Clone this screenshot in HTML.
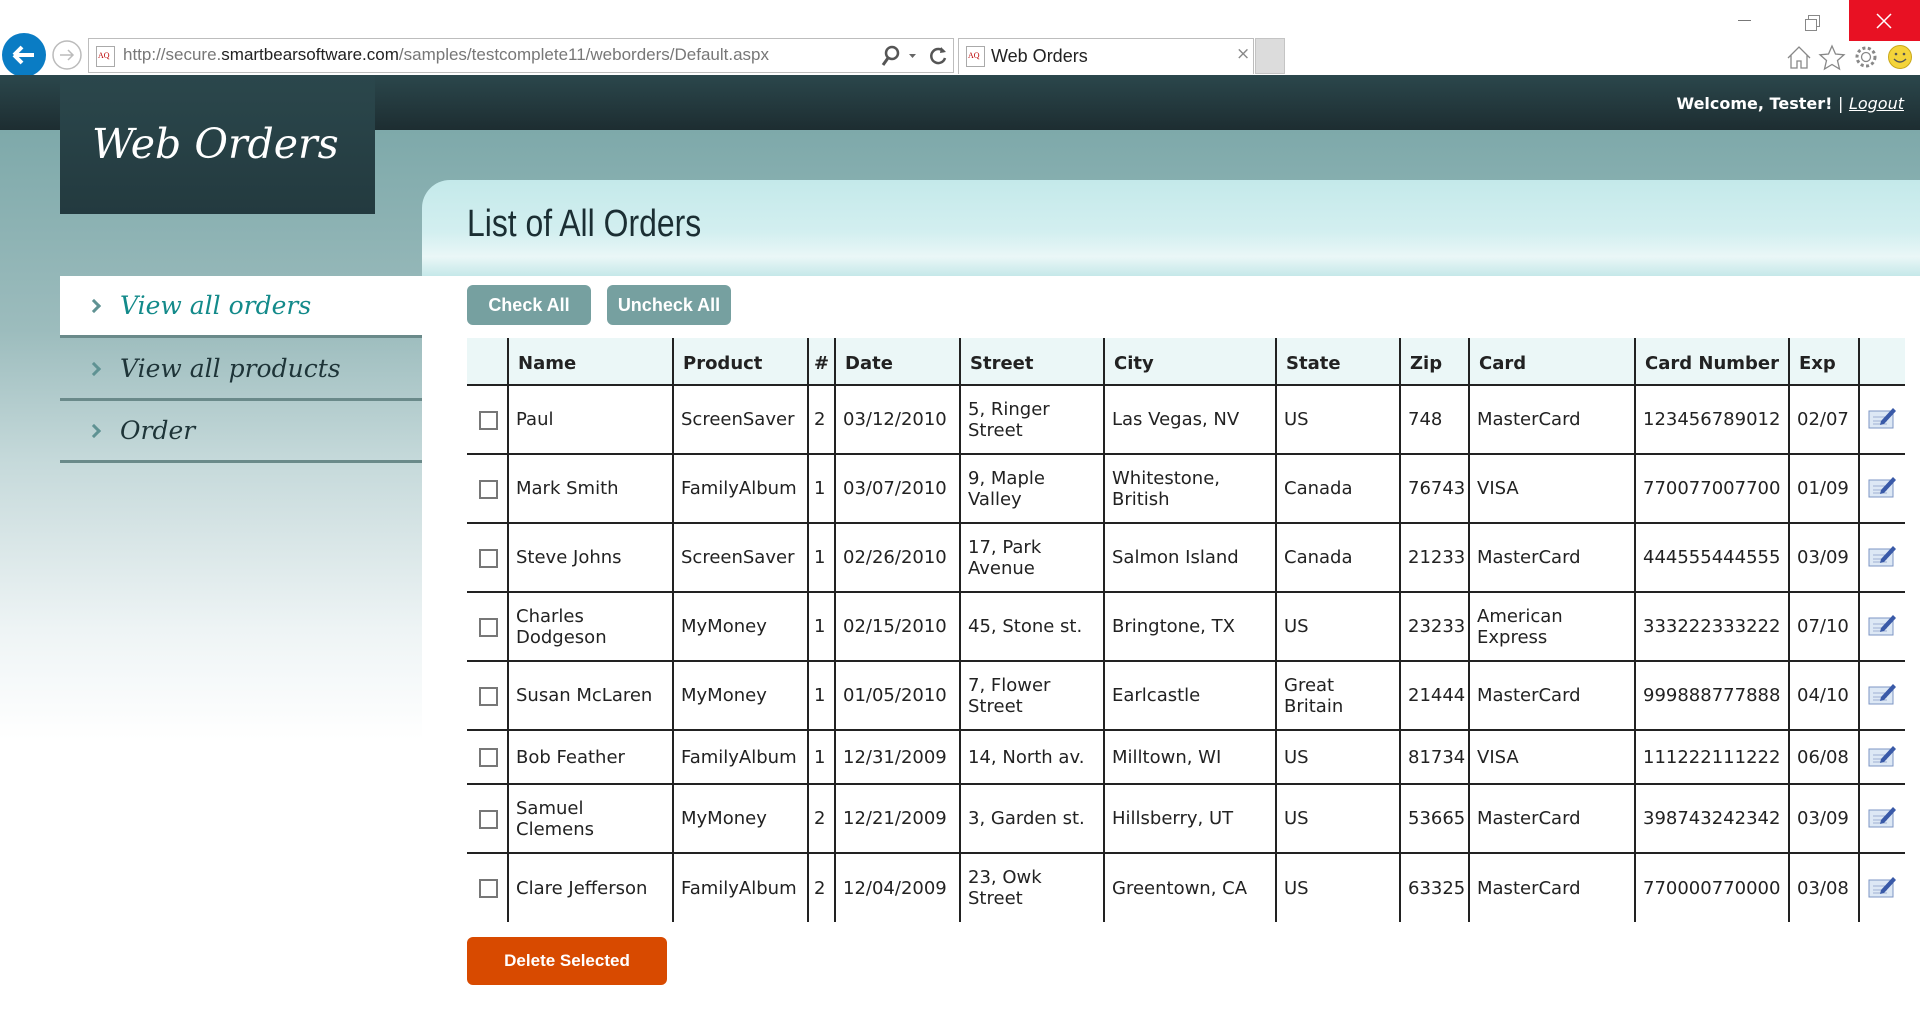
<!DOCTYPE html>
<html><head><meta charset="utf-8">
<style>
*{margin:0;padding:0;box-sizing:border-box}
body{width:1920px;height:1020px;overflow:hidden;background:#fff;font-family:"DejaVu Sans","Liberation Sans",sans-serif;position:relative}
.abs{position:absolute}
#chrome{left:0;top:0;width:1920px;height:75px;background:#fff}
#band{left:0;top:75px;width:1920px;height:55px;background:linear-gradient(#2b474c,#1d2d31)}
#teal{left:0;top:130px;width:1920px;height:890px;background:linear-gradient(#7ea9aa 0px,#9cbcbd 200px,#c5d9da 330px,#eef4f5 500px,#fff 610px)}
#logo{left:60px;top:75px;width:315px;height:139px;background:linear-gradient(#2b474c,#233a3f);color:#fff;font-family:"DejaVu Serif","Liberation Serif",serif;font-style:italic;font-size:41px;padding:45px 0 0 32px}
#panel{left:422px;top:180px;width:1498px;height:96px;border-top-left-radius:28px;background:linear-gradient(#c4e9ea 0%,#d3eff0 55%,#eaf7f7 80%,#c5e8e9 100%)}
#title{left:467px;top:203px;font-family:"Liberation Sans",sans-serif;font-size:38px;color:#1b2e33;transform:scaleX(.84);transform-origin:left}
#white{left:422px;top:276px;width:1498px;height:744px;background:#fff}
.nav{position:absolute;left:60px;width:362px;height:62px;border-bottom:3px solid #6a8a8a;font-family:"DejaVu Serif","Liberation Serif",serif;font-style:italic;font-size:25px;color:#1e3438;padding:15px 0 0 60px}
.nav:before{content:"";position:absolute;left:29px;top:25px;width:7px;height:7px;border-right:3px solid #5f9293;border-top:3px solid #5f9293;transform:rotate(45deg)}
.btn{position:absolute;top:285px;height:40px;background:#76a0a0;color:#fff;border-radius:6px;font-family:"Liberation Sans",sans-serif;font-weight:bold;font-size:18px;text-align:center;line-height:40px}
table{position:absolute;left:467px;top:338px;border-collapse:collapse;table-layout:fixed;font-size:18px;color:#222}
th{background:#ebf7f7;height:47px;text-align:left;padding:5px 0 0 9px;font-weight:bold;border-bottom:2px solid #222}
td{padding:0 0 0 7px;border-bottom:2px solid #222;line-height:21px;vertical-align:middle}
th+th,td+td{border-left:2px solid #222}
tr.r td{height:69px}
tr.s td{height:54px}
.cb{display:inline-block;width:19px;height:19px;border:2px solid #777;margin-left:5px;vertical-align:middle}
#del{left:467px;top:937px;width:200px;height:48px;background:#d84a00;color:#fff;border-radius:6px;font-family:"Liberation Sans",sans-serif;font-weight:bold;font-size:17px;text-align:center;line-height:48px}
</style></head><body>
<div id="chrome" class="abs">
 <svg class="abs" style="left:0;top:32px" width="90" height="44">
  <circle cx="24" cy="23" r="22" fill="#0a7cc4"/>
  <path d="M14 23h20M14 23l8-8M14 23l8 8" stroke="#fff" stroke-width="4" fill="none"/>
  <circle cx="67" cy="23" r="14" fill="#fff" stroke="#bbb" stroke-width="1.5"/>
  <path d="M60 23h13M68 18l5 5-5 5" stroke="#bbb" stroke-width="1.5" fill="none"/>
 </svg>
 <div class="abs" style="left:88px;top:38px;width:866px;height:35px;border:1px solid #bdbdbd"></div>
 <div class="abs" style="left:96px;top:46px;width:19px;height:21px;border:1px solid #aaa;font-size:8px;color:#b00;font-family:'Liberation Serif',serif;padding:4px 0 0 1px">AQ</div>
 <div class="abs" style="left:123px;top:45px;font-family:'Liberation Sans',sans-serif;font-size:17px;color:#777">http://secure.<span style="color:#222">smartbearsoftware.com</span>/samples/testcomplete11/weborders/Default.aspx</div>
 <svg class="abs" style="left:878px;top:44px" width="72" height="24"><circle cx="14" cy="9" r="6" stroke="#555" stroke-width="2.5" fill="none"/><path d="M10 14l-5 7" stroke="#555" stroke-width="3"/><path d="M31 10h7l-3.5 4z" fill="#666"/><path d="M66 8a7 7 0 1 0 1 6" stroke="#555" stroke-width="2.5" fill="none"/><path d="M63 3l5 5-6 1z" fill="#555"/></svg>
 <div class="abs" style="left:958px;top:38px;width:296px;height:36px;border:1px solid #bdbdbd;border-bottom:none"></div>
 <div class="abs" style="left:966px;top:46px;width:19px;height:21px;border:1px solid #aaa;font-size:8px;color:#b00;font-family:'Liberation Serif',serif;padding:4px 0 0 1px">AQ</div>
 <div class="abs" style="left:991px;top:46px;font-family:'Liberation Sans',sans-serif;font-size:18px;color:#222">Web Orders</div>
 <div class="abs" style="left:1236px;top:44px;font-size:17px;color:#888">×</div>
 <div class="abs" style="left:1255px;top:38px;width:30px;height:36px;background:#dcdcdc;border:1px solid #c4c4c4"></div>
 <div class="abs" style="left:1738px;top:20px;width:13px;height:1px;background:#777"></div>
 <div class="abs" style="left:1808px;top:15px;width:12px;height:12px;border:1px solid #888"></div>
 <div class="abs" style="left:1805px;top:19px;width:12px;height:12px;border:1px solid #888;background:#fff"></div>
 <div class="abs" style="left:1849px;top:0;width:71px;height:41px;background:#e81123"></div>
 <svg class="abs" style="left:1876px;top:13px" width="16" height="16"><path d="M1 1l14 14M15 1L1 15" stroke="#fff" stroke-width="1.5"/></svg>
 <svg class="abs" style="left:1786px;top:44px" width="134" height="28">
  <path d="M2 14L13 3l11 11M5 11v13h6v-7h4v7h6V11" stroke="#888" stroke-width="1.3" fill="none"/>
  <path d="M46 2l3.5 8 8.5.8-6.5 5.7 2 8.5L46 20.5 38.5 25l2-8.5L34 10.8l8.5-.8z" stroke="#888" stroke-width="1.3" fill="none"/>
  <circle cx="80" cy="13" r="4.5" stroke="#888" stroke-width="1.3" fill="none"/><circle cx="80" cy="13" r="9" stroke="#888" stroke-width="3" stroke-dasharray="3 2.5" fill="none"/>
  <circle cx="114" cy="13" r="11.5" fill="#f4d43a" stroke="#c9a81a"/><circle cx="110" cy="10" r="1.3" fill="#555"/><circle cx="118" cy="10" r="1.3" fill="#555"/><path d="M108 15q6 6 12 0" stroke="#555" stroke-width="1.3" fill="none"/>
 </svg>
</div>
<div id="band" class="abs"></div>
<div class="abs" style="right:16px;top:94px;color:#fff;font-family:'DejaVu Sans',sans-serif;font-weight:bold;font-size:16px">Welcome, Tester! <span style="font-weight:normal">|</span> <span style="font-weight:normal;font-style:italic;text-decoration:underline">Logout</span></div>
<div id="teal" class="abs"></div>
<div id="logo" class="abs">Web Orders</div>
<div id="panel" class="abs"></div>
<div id="title" class="abs">List of All Orders</div>
<div id="white" class="abs"></div>
<div class="nav" style="top:276px;background:#fff;color:#138a8a">View all orders</div>
<div class="nav" style="top:339px">View all products</div>
<div class="nav" style="top:401px">Order</div>
<div class="btn" style="left:467px;width:124px">Check All</div>
<div class="btn" style="left:607px;width:124px">Uncheck All</div>
<table>
<colgroup><col style="width:41px"><col style="width:165px"><col style="width:135px"><col style="width:27px"><col style="width:125px"><col style="width:144px"><col style="width:172px"><col style="width:124px"><col style="width:69px"><col style="width:166px"><col style="width:154px"><col style="width:70px"><col style="width:46px"></colgroup>
<tr><th></th><th>Name</th><th>Product</th><th style="padding-left:5px">#</th><th>Date</th><th>Street</th><th>City</th><th>State</th><th>Zip</th><th>Card</th><th>Card Number</th><th>Exp</th><th></th></tr>
<tr class="r"><td><span class="cb"></span></td><td>Paul</td><td>ScreenSaver</td><td style="padding-left:5px">2</td><td>03/12/2010</td><td>5, Ringer<br>Street</td><td>Las Vegas, NV</td><td>US</td><td>748</td><td>MasterCard</td><td>123456789012</td><td>02/07</td><td><svg width="30" height="26"><rect x="2" y="7" width="24" height="17" fill="#dde8f5" stroke="#7d96c4"/><path d="M6 13h12M6 17h14M6 20h14" stroke="#9fb1d3"/><path d="M14 17l12-13 3 3-12 13-4 1z" fill="#3a5aa8"/></svg></td></tr>
<tr class="r"><td><span class="cb"></span></td><td>Mark Smith</td><td>FamilyAlbum</td><td style="padding-left:5px">1</td><td>03/07/2010</td><td>9, Maple<br>Valley</td><td>Whitestone,<br>British</td><td>Canada</td><td>76743</td><td>VISA</td><td>770077007700</td><td>01/09</td><td><svg width="30" height="26"><rect x="2" y="7" width="24" height="17" fill="#dde8f5" stroke="#7d96c4"/><path d="M6 13h12M6 17h14M6 20h14" stroke="#9fb1d3"/><path d="M14 17l12-13 3 3-12 13-4 1z" fill="#3a5aa8"/></svg></td></tr>
<tr class="r"><td><span class="cb"></span></td><td>Steve Johns</td><td>ScreenSaver</td><td style="padding-left:5px">1</td><td>02/26/2010</td><td>17, Park<br>Avenue</td><td>Salmon Island</td><td>Canada</td><td>21233</td><td>MasterCard</td><td>444555444555</td><td>03/09</td><td><svg width="30" height="26"><rect x="2" y="7" width="24" height="17" fill="#dde8f5" stroke="#7d96c4"/><path d="M6 13h12M6 17h14M6 20h14" stroke="#9fb1d3"/><path d="M14 17l12-13 3 3-12 13-4 1z" fill="#3a5aa8"/></svg></td></tr>
<tr class="r"><td><span class="cb"></span></td><td>Charles<br>Dodgeson</td><td>MyMoney</td><td style="padding-left:5px">1</td><td>02/15/2010</td><td>45, Stone st.</td><td>Bringtone, TX</td><td>US</td><td>23233</td><td>American<br>Express</td><td>333222333222</td><td>07/10</td><td><svg width="30" height="26"><rect x="2" y="7" width="24" height="17" fill="#dde8f5" stroke="#7d96c4"/><path d="M6 13h12M6 17h14M6 20h14" stroke="#9fb1d3"/><path d="M14 17l12-13 3 3-12 13-4 1z" fill="#3a5aa8"/></svg></td></tr>
<tr class="r"><td><span class="cb"></span></td><td>Susan McLaren</td><td>MyMoney</td><td style="padding-left:5px">1</td><td>01/05/2010</td><td>7, Flower<br>Street</td><td>Earlcastle</td><td>Great<br>Britain</td><td>21444</td><td>MasterCard</td><td>999888777888</td><td>04/10</td><td><svg width="30" height="26"><rect x="2" y="7" width="24" height="17" fill="#dde8f5" stroke="#7d96c4"/><path d="M6 13h12M6 17h14M6 20h14" stroke="#9fb1d3"/><path d="M14 17l12-13 3 3-12 13-4 1z" fill="#3a5aa8"/></svg></td></tr>
<tr class="s"><td><span class="cb"></span></td><td>Bob Feather</td><td>FamilyAlbum</td><td style="padding-left:5px">1</td><td>12/31/2009</td><td>14, North av.</td><td>Milltown, WI</td><td>US</td><td>81734</td><td>VISA</td><td>111222111222</td><td>06/08</td><td><svg width="30" height="26"><rect x="2" y="7" width="24" height="17" fill="#dde8f5" stroke="#7d96c4"/><path d="M6 13h12M6 17h14M6 20h14" stroke="#9fb1d3"/><path d="M14 17l12-13 3 3-12 13-4 1z" fill="#3a5aa8"/></svg></td></tr>
<tr class="r"><td><span class="cb"></span></td><td>Samuel<br>Clemens</td><td>MyMoney</td><td style="padding-left:5px">2</td><td>12/21/2009</td><td>3, Garden st.</td><td>Hillsberry, UT</td><td>US</td><td>53665</td><td>MasterCard</td><td>398743242342</td><td>03/09</td><td><svg width="30" height="26"><rect x="2" y="7" width="24" height="17" fill="#dde8f5" stroke="#7d96c4"/><path d="M6 13h12M6 17h14M6 20h14" stroke="#9fb1d3"/><path d="M14 17l12-13 3 3-12 13-4 1z" fill="#3a5aa8"/></svg></td></tr>
<tr class="r"><td style="border-bottom:none"><span class="cb"></span></td><td style="border-bottom:none">Clare Jefferson</td><td style="border-bottom:none">FamilyAlbum</td><td style="padding-left:5px;border-bottom:none">2</td><td style="border-bottom:none">12/04/2009</td><td style="border-bottom:none">23, Owk<br>Street</td><td style="border-bottom:none">Greentown, CA</td><td style="border-bottom:none">US</td><td style="border-bottom:none">63325</td><td style="border-bottom:none">MasterCard</td><td style="border-bottom:none">770000770000</td><td style="border-bottom:none">03/08</td><td style="border-bottom:none"><svg width="30" height="26"><rect x="2" y="7" width="24" height="17" fill="#dde8f5" stroke="#7d96c4"/><path d="M6 13h12M6 17h14M6 20h14" stroke="#9fb1d3"/><path d="M14 17l12-13 3 3-12 13-4 1z" fill="#3a5aa8"/></svg></td></tr>
</table>
<div id="del" class="abs">Delete Selected</div>
</body></html>
